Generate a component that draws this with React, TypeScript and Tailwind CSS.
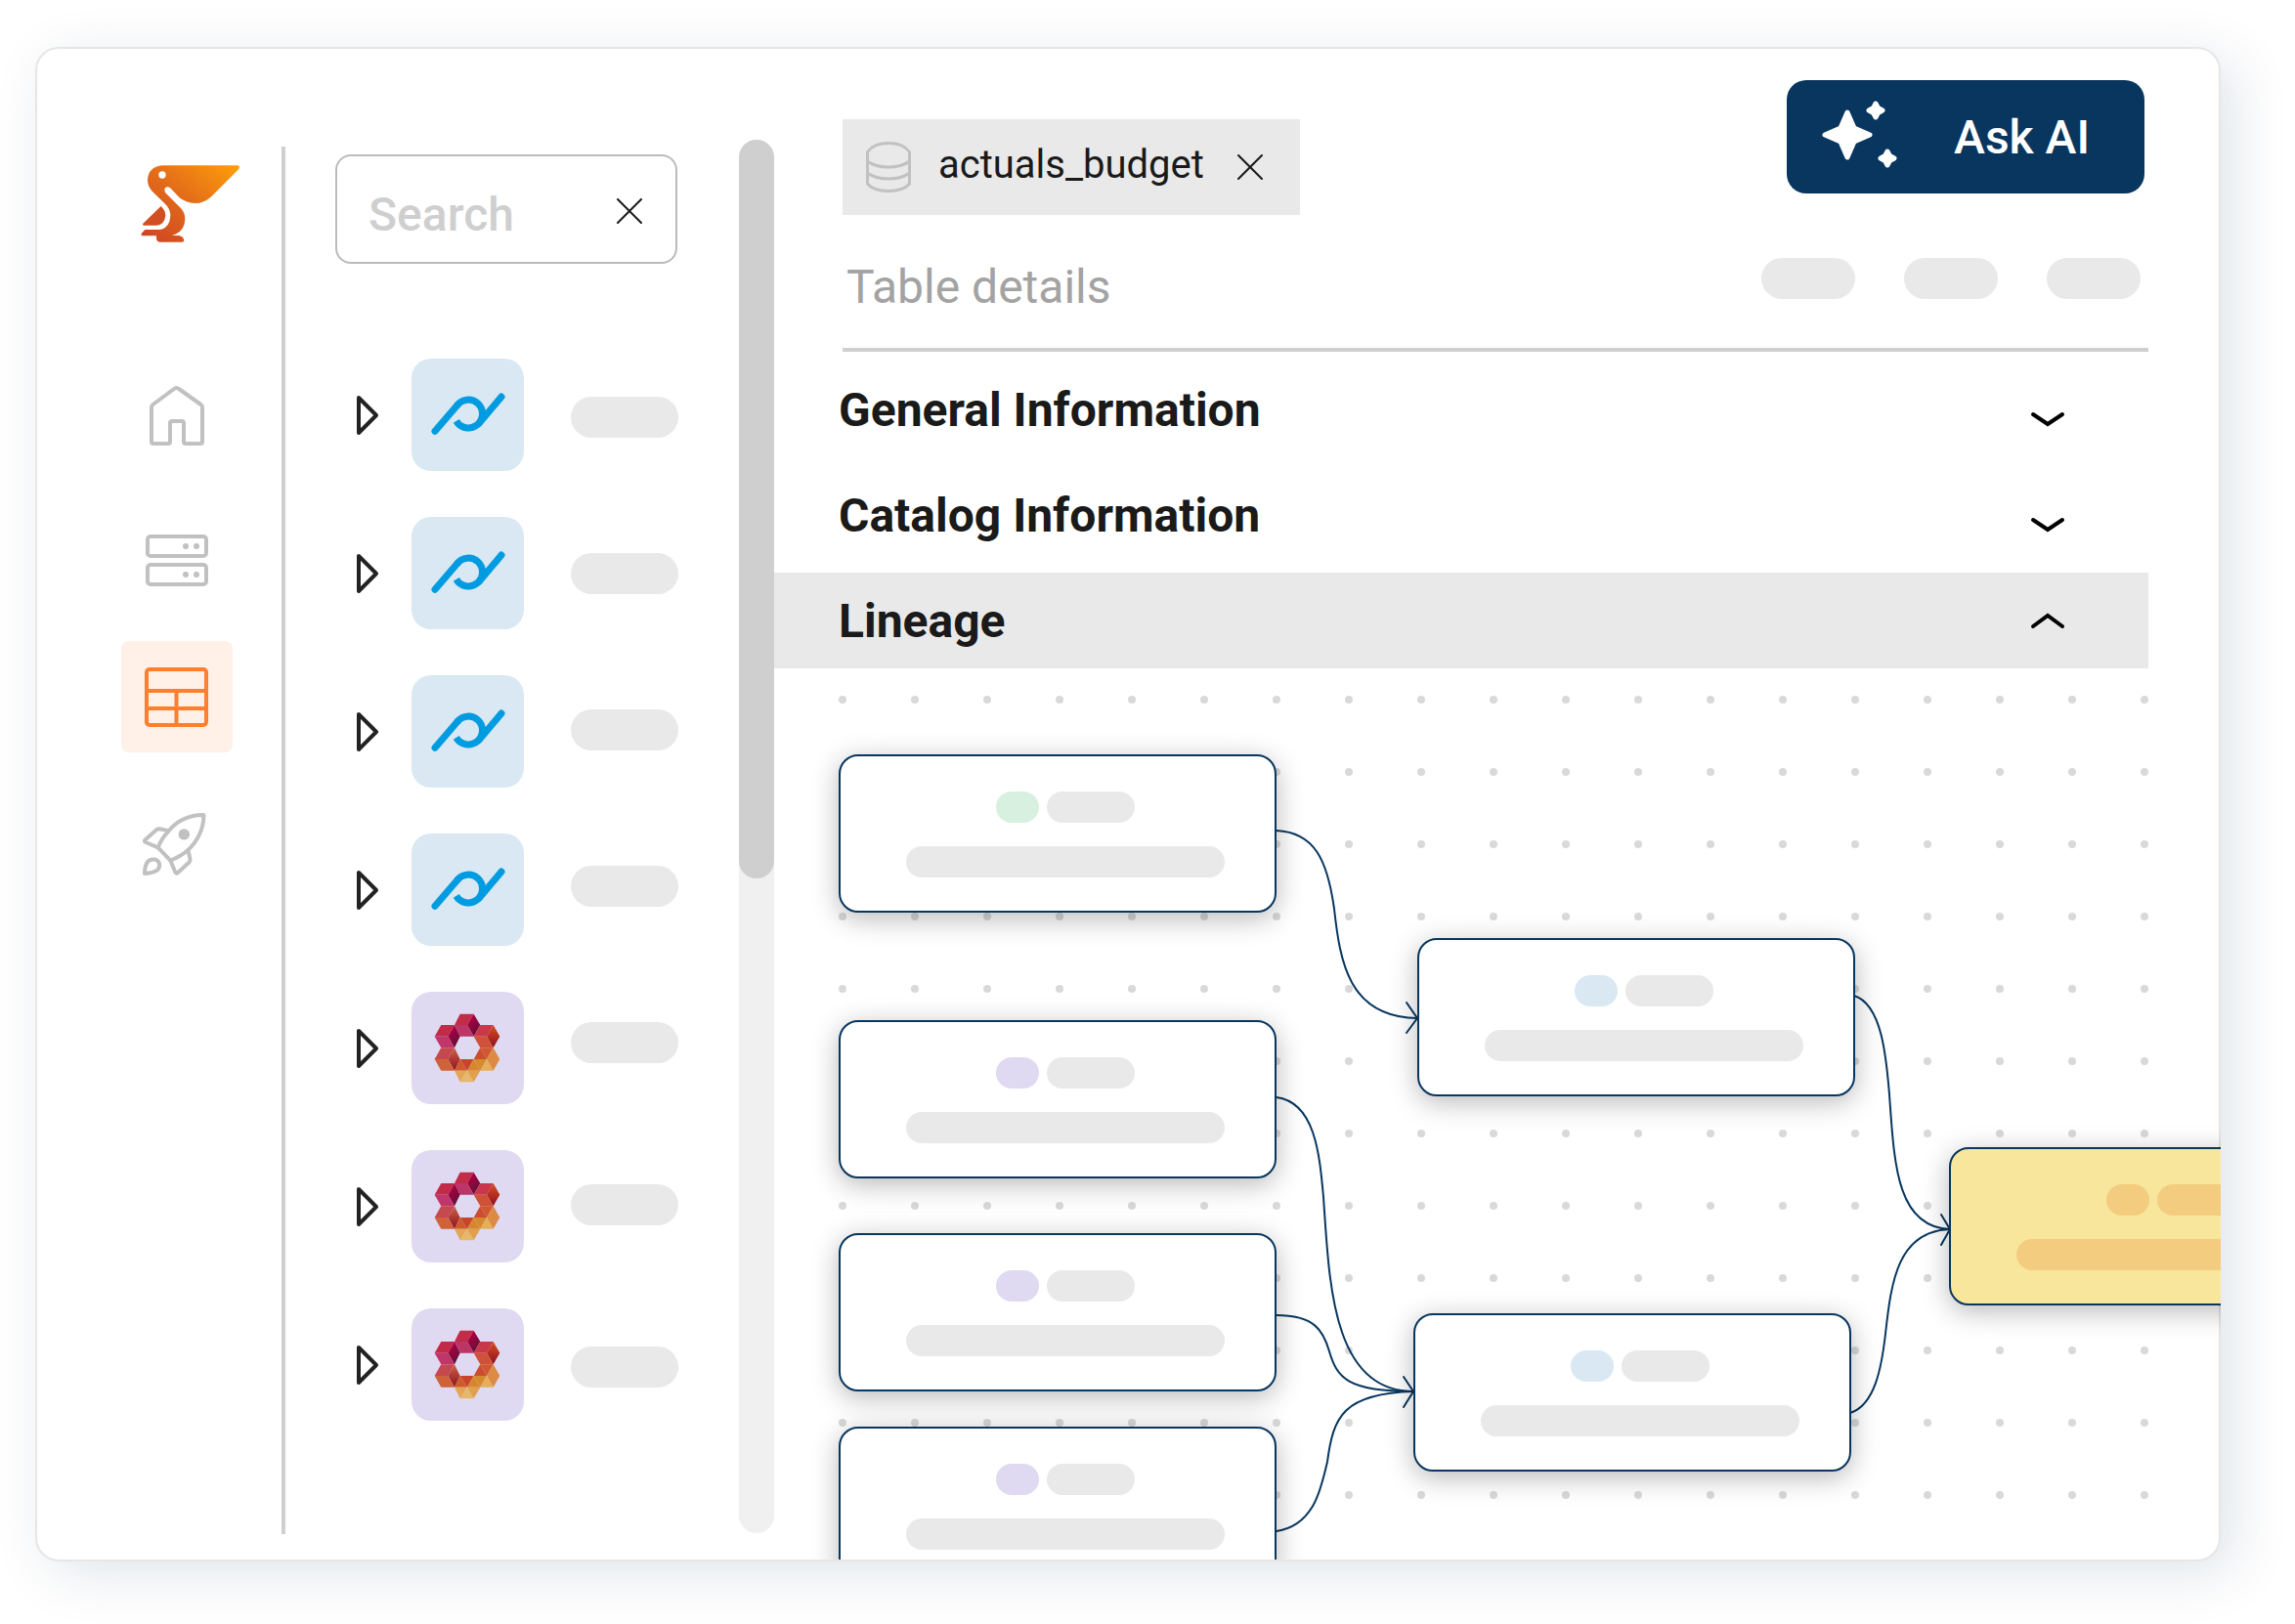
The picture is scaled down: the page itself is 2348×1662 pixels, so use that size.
import { useState } from "react";

type SourceKind = "pentaho" | "hexagon";

interface LineageNode {
  id: string;
  x: number;
  y: number;
  tag: string;
  highlighted?: boolean;
}

const sources: { id: string; kind: SourceKind }[] = [
  { id: "source-1", kind: "pentaho" },
  { id: "source-2", kind: "pentaho" },
  { id: "source-3", kind: "pentaho" },
  { id: "source-4", kind: "pentaho" },
  { id: "source-5", kind: "hexagon" },
  { id: "source-6", kind: "hexagon" },
  { id: "source-7", kind: "hexagon" },
];

const nodes: LineageNode[] = [
  { id: "n1", x: 66, y: 88, tag: "bg-[#d8f0e0]" },
  { id: "n2", x: 66, y: 360, tag: "bg-[#dfdaf1]" },
  { id: "n3", x: 66, y: 578, tag: "bg-[#dfdaf1]" },
  { id: "n4", x: 66, y: 776, tag: "bg-[#dfdaf1]" },
  { id: "n5", x: 658, y: 276, tag: "bg-[#d9e8f2]" },
  { id: "n6", x: 654, y: 660, tag: "bg-[#d9e8f2]" },
  { id: "n7", x: 1202, y: 490, tag: "bg-[#f4cc7f]", highlighted: true },
];

const edges = [
  "M514 166C553 168 566 196 573 246C579 301 588 357 658 358",
  "M514 439C553 444 558 496 562 541C568 626 570 740 654 740",
  "M514 662C553 662 562 678 568 699C576 726 586 740 654 740",
  "M514 883C554 877 560 836 566 812C572 766 582 742 654 740",
  "M1105 335C1134 344 1138 401 1141 436C1146 506 1148 572 1203 574",
  "M1101 762C1126 754 1133 716 1137 681C1143 626 1150 576 1203 574",
  "M647 342L658 358L647 373",
  "M644 725L654 740L644 756",
  "M1194 559L1203 574L1194 590",
];

const hexagonFaces: [string, string][] = [
  ["390,113 432,113 412,147 373,147", "#c22c48"],
  ["432,113 452,147 432,182 412,147", "url(#hexDark)"],
  ["373,147 412,147 432,182 390,182", "#bd3466"],
  ["332,147 373,147 353,182 312,182", "#c22b48"],
  ["373,147 390,182 373,217 353,182", "url(#hexDark)"],
  ["312,182 353,182 373,217 332,217", "#c0366b"],
  ["332,217 373,217 353,252 312,252", "#c5484f"],
  ["373,217 390,252 373,287 353,252", "url(#hexRust)"],
  ["312,252 353,252 373,287 332,287", "#d0623a"],
  ["390,252 412,287 373,287", "#cf5a2d"],
  ["390,252 432,252 412,287", "#c8452a"],
  ["432,252 452,287 412,287", "#d8862e"],
  ["373,287 412,287 390,322", "#e3a556"],
  ["412,287 432,322 390,322", "#e7b76c"],
  ["412,287 452,287 432,322", "#e0a04c"],
  ["452,217 472,252 432,252", "#cb4d2e"],
  ["452,217 492,217 472,252", "#d0572f"],
  ["492,217 512,252 492,287 472,252", "#dd8a42"],
  ["432,252 472,252 452,287", "#d58a2f"],
  ["472,252 492,287 452,287", "#e6ae58"],
  ["452,147 492,147 472,182 432,182", "#c9384a"],
  ["492,147 512,182 492,217 472,182", "url(#hexRed)"],
  ["432,182 472,182 492,217 452,217", "#cf5238"],
];

const PelicanLogo = () => (
  <svg className="ml-5 h-20 w-[102px]" viewBox="40 54 306 240" aria-hidden="true">
    <defs>
      <linearGradient id="pelican" x1="0" y1="1" x2="1" y2="0">
        <stop offset="0" stopColor="#cc4224" />
        <stop offset="0.5" stopColor="#e26b1a" />
        <stop offset="1" stopColor="#ff9f0a" />
      </linearGradient>
    </defs>
    <path
      d="M106 58H338Q346 60 341 69L258 152Q235 174 207 174Q178 173 158 156L132 128Q122 120 115 127Q110 133 115 141L160 186Q176 202 176 222Q175 262 135 273H155Q171 274 173 289Q172 293 168 293H98Q89 292 88 283V274H44Q40 272 42 267L53 255H98Q130 250 131 210Q130 190 115 176L75 137Q61 122 61 103Q63 62 106 58Z"
      fill="url(#pelican)"
    />
    <path
      d="M102 183Q116 196 116 212Q113 240 88 242H49Q44 240 47 236Z"
      fill="#d24f23"
    />
    <circle cx="106" cy="87" r="11" fill="#fff" />
  </svg>
);

const HomeIcon = () => (
  <svg className="size-20" viewBox="0 0 80 80" fill="none" stroke="#c1c1c1" strokeWidth="4" strokeLinejoin="round">
    <path d="M37 17L15.5 33Q14 34 14 36V71Q14 73 16 73H31Q33 73 33 71V52Q33 50 35 50H45Q47 50 47 52V71Q47 73 49 73H64Q66 73 66 71V36Q66 34 64.5 33L42 17Q39.5 15 37 17Z" />
  </svg>
);

const ServerIcon = () => (
  <svg className="size-20" viewBox="0 0 80 80" fill="none" stroke="#c1c1c1" strokeWidth="4">
    <rect x="10" y="22" width="60" height="20" rx="3" />
    <rect x="10" y="51" width="60" height="20" rx="3" />
    <g fill="#c1c1c1" stroke="none">
      <circle cx="49" cy="32" r="3" />
      <circle cx="60" cy="32" r="3" />
      <circle cx="49" cy="61" r="3" />
      <circle cx="60" cy="61" r="3" />
    </g>
  </svg>
);

const TableIcon = () => (
  <svg className="size-20" viewBox="0 0 80 80" fill="none" stroke="#ff7f2e" strokeWidth="4">
    <rect x="9" y="12" width="61" height="57" rx="3" />
    <path d="M9 34H70M9 52H70M39.5 34V69" />
  </svg>
);

const RocketIcon = () => (
  <svg className="size-20" viewBox="0 0 80 80" fill="none" stroke="#c1c1c1" strokeWidth="4" strokeLinejoin="round">
    <path d="M67 15Q45 15 31.7 31.3Q24 39 20.7 48.4L33.3 61.6Q43 58 51.3 51Q67 36 67.5 15.5Z" />
    <path d="M31.7 31.3L22 29.3Q20.5 29 19 30.3L7.5 40.5Q6 42 8 43L20.7 48.4" />
    <path d="M51.3 51L53.5 60Q54 62 52.5 63.5L41 74Q39.3 75.5 38.3 73.5L33.3 61.6" />
    <path d="M7 75C7 65 10 60.5 16 60.5C22 60.5 24 67 20.5 71Q16.5 74.5 7 75Z" />
    <circle cx="47.3" cy="34.9" r="5.7" fill="#c1c1c1" stroke="none" />
  </svg>
);

const PentahoIcon = () => (
  <svg className="h-[45px] w-[77px]" viewBox="301 154 230 134" fill="none" stroke="#009be0" strokeWidth="21">
    <path d="M316 271L384 192" strokeLinecap="round" />
    <path d="M383 193A43 43 0 1 1 381 240" strokeLinejoin="round" />
    <path d="M519 166L450 248" strokeLinecap="round" />
  </svg>
);

const HexagonIcon = () => (
  <svg className="h-[71px] w-[70px]" viewBox="310 111 210 213">
    <defs>
      <linearGradient id="hexDark" x1="0" y1="0" x2="0.6" y2="1">
        <stop offset="0.3" stopColor="#a80040" />
        <stop offset="1" stopColor="#5f1238" />
      </linearGradient>
      <linearGradient id="hexRust" x1="0" y1="0" x2="0" y2="1">
        <stop offset="0.1" stopColor="#c65a42" />
        <stop offset="1" stopColor="#8e1020" />
      </linearGradient>
      <linearGradient id="hexRed" x1="0" y1="0" x2="0" y2="1">
        <stop offset="0.1" stopColor="#d2481f" />
        <stop offset="1" stopColor="#8e1020" />
      </linearGradient>
    </defs>
    {hexagonFaces.map(([points, fill]) => (
      <polygon key={points} points={points} fill={fill} />
    ))}
  </svg>
);

const CloseIcon = () => (
  <svg className="size-[26px]" viewBox="0 0 26 26" stroke="#1a1a1a" strokeWidth="2" strokeLinecap="round">
    <path d="M1 1L25 25M25 1L1 25" />
  </svg>
);

const DatabaseIcon = () => (
  <svg className="h-[52px] w-[46px]" viewBox="0 0 46 52" fill="none" stroke="#c1c1c1" strokeWidth="3">
    <path d="M1.5 10.5C10 -1.5 36 -1.5 44.5 10.5V43C36 53 10 53 1.5 43ZM1.5 20C12 28 34 28 44.5 20M1.5 32C12 40 34 40 44.5 32" />
  </svg>
);

const SparklesIcon = () => (
  <svg className="h-[76px] w-20" viewBox="0 0 80 76" fill="#fff" stroke="#fff" strokeLinejoin="round">
    <path strokeWidth="5" d="M27 12L34 28L50 35L34 42L27 58L20 42L4 35L20 28Z" />
    <path strokeWidth="5" d="M56 3L58.5 7.5L63 10L58.5 12.5L56 17L53.5 12.5L49 10L53.5 7.5Z" />
    <path strokeWidth="5" d="M68 52L70.5 56.5L75 59L70.5 61.5L68 66L65.5 61.5L61 59L65.5 56.5Z" />
  </svg>
);

const ChevronIcon = ({ open }: { open: boolean }) => (
  <svg className="size-10" viewBox="0 0 40 40" fill="none" stroke="#000" strokeWidth="4" strokeLinecap="round">
    <path d={open ? "M5 25L20 14L35 25" : "M5 24L20 34L35 24"} />
  </svg>
);

const navItems = [
  { label: "Home", icon: HomeIcon },
  { label: "Servers", icon: ServerIcon },
  { label: "Tables", icon: TableIcon, active: true },
  { label: "Launch", icon: RocketIcon },
];

const Sidebar = () => (
  <aside className="mt-[100px] mb-[26px] flex w-[254px] shrink-0 flex-col border-r-4 border-[#cfcfcf] pt-[18px] pl-[86px]">
    <PelicanLogo />
    <nav className="mt-[116px] flex flex-col gap-8">
      {navItems.map(({ label, icon: Icon, active }) => (
        <button
          key={label}
          aria-label={label}
          className={`flex size-[114px] items-center justify-center rounded-lg ${active ? "bg-[#fff0e8]" : ""}`}
        >
          <Icon />
        </button>
      ))}
    </nav>
  </aside>
);

const SourcesPanel = () => {
  const [search, setSearch] = useState("");

  return (
    <section className="w-[464px] shrink-0 pt-[108px] pr-[63px] pl-[51px]">
      <div className="flex h-28 items-center rounded-2xl border-2 border-[#bbbbbb] pt-1 pr-[34px] pl-8">
        <input
          aria-label="Search"
          className="h-full min-w-0 flex-1 pt-1.5 text-5xl font-medium text-[#1a1a1a] outline-none placeholder:text-[#cfcfcf]"
          placeholder="Search"
          value={search}
          onChange={(e) => setSearch(e.target.value)}
        />
        <button aria-label="Clear search" onClick={() => setSearch("")}>
          <CloseIcon />
        </button>
      </div>
      <div className="mt-[97px] flex gap-12 pl-[22px]">
        <ul className="flex flex-col gap-[47px]">
          {sources.map(({ id, kind }) => (
            <li key={id} className="flex items-center gap-8">
              <button aria-label="Expand source">
                <svg className="h-[42px] w-6" viewBox="0 0 24 42" fill="none" stroke="#222" strokeWidth="4" strokeLinejoin="round">
                  <path d="M2 3V39L20 21Z" />
                </svg>
              </button>
              <div
                className={`flex size-[115px] items-center justify-center rounded-[20px] ${
                  kind === "pentaho" ? "bg-[#d9e8f2]" : "bg-[#dfdaf1]"
                }`}
              >
                {kind === "pentaho" ? <PentahoIcon /> : <HexagonIcon />}
              </div>
            </li>
          ))}
        </ul>
        <div className="flex flex-col gap-[118px] pt-[39px]">
          <div className="flex flex-col gap-[118px]">
            {sources
              .filter(({ kind }) => kind === "pentaho")
              .map(({ id }) => (
                <div key={id} className="h-[42px] w-[110px] rounded-full bg-[#e9e9e9]" />
              ))}
          </div>
          <div className="flex flex-col gap-[124px]">
            {sources
              .filter(({ kind }) => kind === "hexagon")
              .map(({ id }) => (
                <div key={id} className="h-[42px] w-[110px] rounded-full bg-[#e9e9e9]" />
              ))}
          </div>
        </div>
      </div>
    </section>
  );
};

const NodeCard = ({ node }: { node: LineageNode }) => {
  const bar = node.highlighted ? "bg-[#f4cc7f]" : "bg-[#e9e9e9]";

  return (
    <div
      className={`absolute flex h-[162px] w-[448px] flex-col items-center gap-6 rounded-[20px] border-2 border-[#08365f] pt-9 pl-4 shadow-[0_6px_28px_rgba(0,0,0,0.28)] ${
        node.highlighted ? "bg-[#f8e69d]" : "bg-white"
      }`}
      style={{ left: node.x, top: node.y }}
    >
      <div className="flex gap-2">
        <div className={`h-8 w-11 rounded-full ${node.tag}`} />
        <div className={`h-8 w-[90px] rounded-full ${bar}`} />
      </div>
      <div className={`h-8 w-[326px] rounded-full ${bar}`} />
    </div>
  );
};

const LineageCanvas = () => (
  <div className="relative -mr-0.5 h-[912px] overflow-hidden">
    <svg className="absolute top-0 left-0" width="1480" height="912" viewBox="0 0 1480 912" fill="none">
      <defs>
        <pattern id="dots" x="66" y="28" width="74" height="74" patternUnits="userSpaceOnUse">
          <circle cx="4" cy="4" r="4" fill="#d9d9d9" />
        </pattern>
      </defs>
      <rect x="66" y="28" width="1340" height="822" fill="url(#dots)" />
      {edges.map((d) => (
        <path key={d} d={d} stroke="#08365f" strokeWidth="2" strokeLinecap="round" />
      ))}
    </svg>
    {nodes.map((node) => (
      <NodeCard key={node.id} node={node} />
    ))}
  </div>
);

const sections = [
  { title: "General Information", open: false },
  { title: "Catalog Information", open: false },
  { title: "Lineage", open: true },
];

const App = () => (
  <div className="bg-white pt-12 pr-[76px] pb-16 pl-9 font-['Roboto',sans-serif]">
    <div className="flex rounded-3xl border-2 border-[#e6e6e6] bg-white shadow-[14px_12px_56px_rgba(8,54,95,0.13)]">
      <Sidebar />
      <SourcesPanel />
      <div className="mt-[93px] mb-[27px] w-9 shrink-0 rounded-full bg-[#f0f0f0]">
        <div className="h-[53%] rounded-full bg-[#cfcfcf]" />
      </div>
      <main className="min-w-0 flex-1">
        <header className="flex items-start justify-between pt-8 pr-[76px] pl-[70px]">
          <div className="mt-10 flex h-[98px] items-center bg-[#e9e9e9] pr-[38px] pl-6">
            <DatabaseIcon />
            <span className="ml-7 pb-1 text-[40px] leading-[48px] text-[#1a1a1a]">actuals_budget</span>
            <button aria-label="Close tab" className="ml-[34px]">
              <CloseIcon />
            </button>
          </div>
          <button className="flex h-[116px] items-center gap-14 rounded-[20px] bg-[#08365f] pt-0.5 pr-14 pl-[35px] text-5xl leading-[56px] font-medium text-white">
            <SparklesIcon />
            Ask AI
          </button>
        </header>
        <div className="mr-[72px] ml-[70px] flex h-[140px] items-start justify-between border-b-4 border-[#cfcfcf] pt-11 pr-2 pl-1">
          <h1 className="pt-0.5 text-5xl leading-[56px] text-[#a3a3a3]">Table details</h1>
          <div className="flex gap-[50px]">
            <div className="h-[42px] w-24 rounded-full bg-[#e9e9e9]" />
            <div className="h-[42px] w-24 rounded-full bg-[#e9e9e9]" />
            <div className="h-[42px] w-24 rounded-full bg-[#e9e9e9]" />
          </div>
        </div>
        <div className="mt-2.5 mr-[72px] flex flex-col gap-2.5">
          {sections.map(({ title, open }) => (
            <button
              key={title}
              aria-expanded={open}
              className={`flex h-[98px] items-center justify-between pt-0.5 pr-[83px] pl-[66px] text-5xl leading-[56px] font-bold text-[#1a1a1a] ${
                open ? "bg-[#e9e9e9]" : ""
              }`}
            >
              {title}
              <ChevronIcon open={open} />
            </button>
          ))}
        </div>
        <LineageCanvas />
      </main>
    </div>
  </div>
);

export default App;
